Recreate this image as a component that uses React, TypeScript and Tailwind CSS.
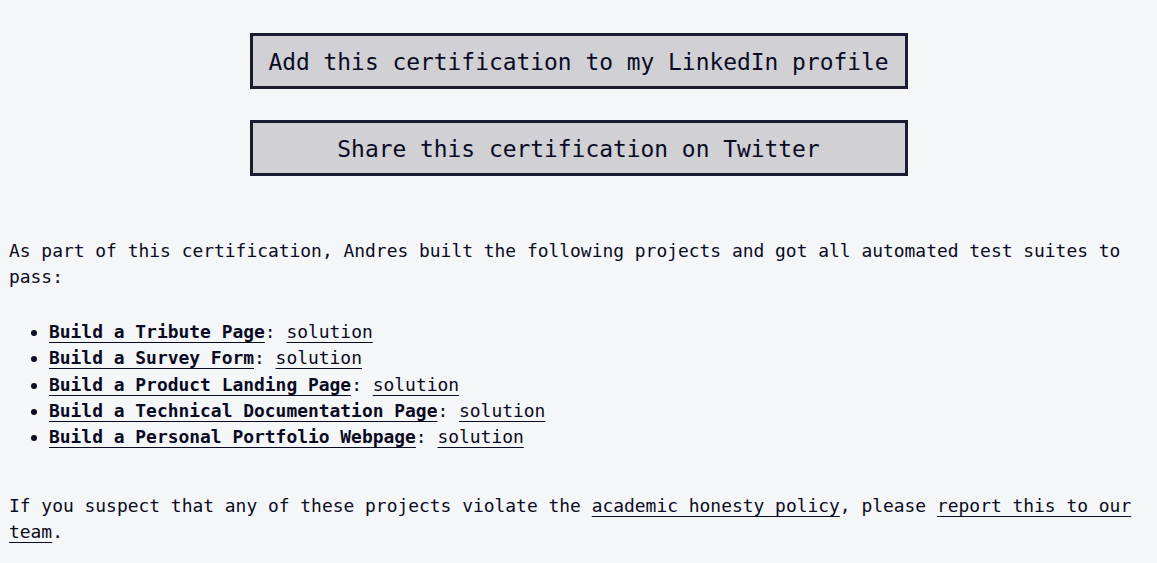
const projects = [
  "Build a Tribute Page",
  "Build a Survey Form",
  "Build a Product Landing Page",
  "Build a Technical Documentation Page",
  "Build a Personal Portfolio Webpage",
];

export default function App() {
  return (
    <div
      className="min-h-[563px] bg-[#f5f6f7] text-[#0a0a23] px-[9px] pt-[33px]"
      style={{ fontFamily: '"DejaVu Sans Mono", "Liberation Mono", monospace' }}
    >
      <div className="flex flex-col items-center gap-[31px]">
        <button className="h-[56px] w-[658px] border-[3px] border-[#1b1b32] bg-[#d0d0d5] pt-[3px] text-[22.9px] text-[#0a0a23]">
          Add this certification to my LinkedIn profile
        </button>
        <button className="h-[56px] w-[658px] border-[3px] border-[#1b1b32] bg-[#d0d0d5] pt-[3px] text-[22.9px] text-[#0a0a23]">
          Share this certification on Twitter
        </button>
      </div>

      <p className="mt-[62px] text-[17.93px] leading-[26px]">
        As part of this certification, Andres built the following projects and got all automated test suites to pass:
      </p>

      <ul className="mt-[29px] list-disc pl-[40px] text-[17.93px] leading-[26.3px]">
        {projects.map((p) => (
          <li key={p}>
            <a href="#" className="font-bold underline underline-offset-[4px] decoration-1">
              {p}
            </a>
            :{" "}
            <a href="#" className="underline underline-offset-[4px] decoration-1">
              solution
            </a>
          </li>
        ))}
      </ul>

      <p className="mt-[43px] text-[17.93px] leading-[26px]">
        If you suspect that any of these projects violate the{" "}
        <a href="#" className="underline underline-offset-[4px] decoration-1">
          academic honesty policy
        </a>
        , please{" "}
        <a href="#" className="underline underline-offset-[4px] decoration-1">
          report this to our team
        </a>
        .
      </p>
    </div>
  );
}
